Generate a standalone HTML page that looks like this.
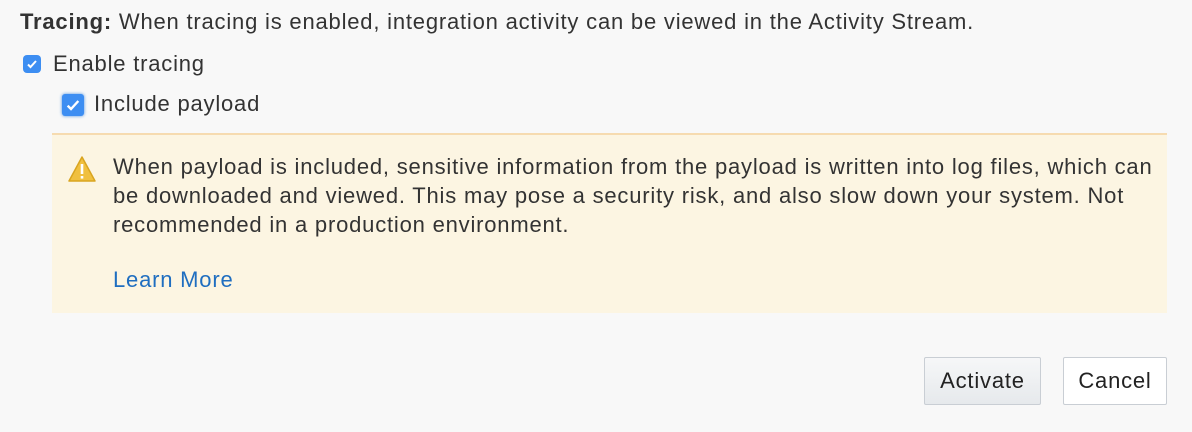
<!DOCTYPE html>
<html><head><style>
body{margin:0;width:1192px;height:432px;background:#f8f8f8;font-family:"Liberation Sans",Arial,sans-serif;color:#333;position:relative;overflow:hidden}
.a{position:absolute;white-space:nowrap;font-size:22px;letter-spacing:0.8px}
.cb{position:absolute;width:18px;height:18px;background:#3d8ef2;border-radius:4px}
.cb svg{position:absolute;left:3px;top:3px}
.box{position:absolute;left:52px;top:133px;width:1115px;height:180px;background:#fcf5e2;border-top:2px solid #f6dbb0;box-sizing:border-box}
.btn{position:absolute;top:357px;height:48px;border:1px solid #c9ced4;border-radius:2px;box-sizing:border-box;font-size:22px;letter-spacing:0.8px;line-height:46px;text-align:center;color:#222}
</style></head><body>
<div class="a" style="left:20px;top:9px"><b>Tracing:</b> When tracing is enabled, integration activity can be viewed in the Activity Stream.</div>
<div class="cb" style="left:23px;top:55px"><svg width="12" height="12" viewBox="0 0 12 12"><path d="M2 6.5l2.5 2.5L10 3" stroke="#fff" stroke-width="2" fill="none"/></svg></div>
<div class="a" style="left:53px;top:51px">Enable tracing</div>
<div class="cb" style="left:62px;top:94px;width:22px;height:22px;border-radius:3px;box-shadow:0 0 3px #4a90e2"><svg width="16" height="16" viewBox="0 0 12 12"><path d="M2 6.5l2.5 2.5L10 3" stroke="#fff" stroke-width="1.8" fill="none"/></svg></div>
<div class="a" style="left:94px;top:91px">Include payload</div>
<div class="box"></div>
<svg style="position:absolute;left:67px;top:155px" width="30" height="28" viewBox="0 0 30 28"><path d="M15 2L28 26H2Z" fill="#f0c040" stroke="#d9a520" stroke-width="1.5" stroke-linejoin="round"/><rect x="13.7" y="9" width="2.6" height="10" fill="#fff"/><rect x="13.7" y="21" width="2.6" height="2.6" fill="#fff"/></svg>
<div class="a" style="left:113px;top:152px;line-height:29px">When payload is included, sensitive information from the payload is written into log files, which can<br>be downloaded and viewed. This may pose a security risk, and also slow down your system. Not<br>recommended in a production environment.</div>
<div class="a" style="left:113px;top:267px;color:#1f6ec0">Learn More</div>
<div class="btn" style="left:924px;width:117px;background:linear-gradient(#f6f7f8,#e6e9ec)">Activate</div>
<div class="btn" style="left:1063px;width:104px;background:#fff">Cancel</div>
</body></html>
